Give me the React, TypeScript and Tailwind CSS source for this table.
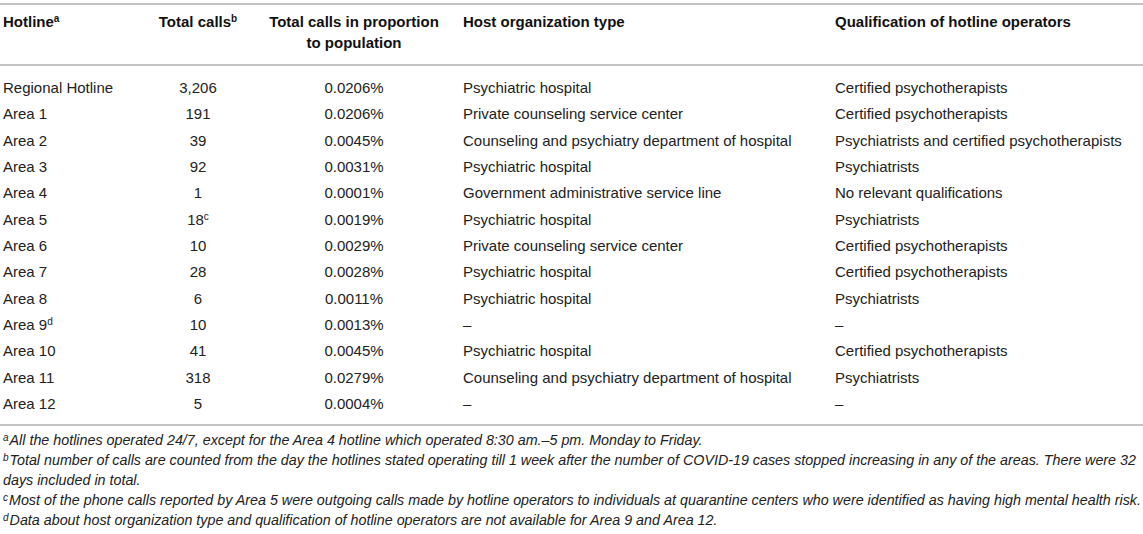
import React from "react";

const rows: [React.ReactNode, React.ReactNode, string, string, string][] = [
  ["Regional Hotline", "3,206", "0.0206%", "Psychiatric hospital", "Certified psychotherapists"],
  ["Area 1", "191", "0.0206%", "Private counseling service center", "Certified psychotherapists"],
  ["Area 2", "39", "0.0045%", "Counseling and psychiatry department of hospital", "Psychiatrists and certified psychotherapists"],
  ["Area 3", "92", "0.0031%", "Psychiatric hospital", "Psychiatrists"],
  ["Area 4", "1", "0.0001%", "Government administrative service line", "No relevant qualifications"],
  ["Area 5", <>18<sup className="text-[10px] leading-none relative -top-[5px]">c</sup></>, "0.0019%", "Psychiatric hospital", "Psychiatrists"],
  ["Area 6", "10", "0.0029%", "Private counseling service center", "Certified psychotherapists"],
  ["Area 7", "28", "0.0028%", "Psychiatric hospital", "Certified psychotherapists"],
  ["Area 8", "6", "0.0011%", "Psychiatric hospital", "Psychiatrists"],
  [<>Area 9<sup className="text-[10px] leading-none relative -top-[5px]">d</sup></>, "10", "0.0013%", "–", "–"],
  ["Area 10", "41", "0.0045%", "Psychiatric hospital", "Certified psychotherapists"],
  ["Area 11", "318", "0.0279%", "Counseling and psychiatry department of hospital", "Psychiatrists"],
  ["Area 12", "5", "0.0004%", "–", "–"],
];

const grid = "grid grid-cols-[143px_110px_202px_372px_1fr]";

function Sup({ c }: { c: string }) {
  return <sup className="text-[10px] leading-none relative -top-[5px]">{c}</sup>;
}

function FSup({ c }: { c: string }) {
  return <sup className="text-[10px] leading-none relative -top-[4px] mr-[1px]">{c}</sup>;
}

export default function App() {
  return (
    <div
      className="w-[1143px] h-[534px] bg-white text-[#222] overflow-hidden"
      style={{ fontFamily: '"Liberation Sans", Arial, sans-serif' }}
    >
      <div className="pt-[3px]">
        <div className="border-t-2 border-[#c4c4c4]" />
        <div className={`${grid} pt-[6px] pb-[11px] text-[15px] leading-[21px] font-bold text-[#111] border-b-2 border-[#c4c4c4]`}>
          <div className="pl-[3px]">Hotline<Sup c="a" /></div>
          <div className="text-center">Total calls<Sup c="b" /></div>
          <div className="text-center">Total calls in proportion<br />to population</div>
          <div className="pl-[8px]">Host organization type</div>
          <div className="pl-[8px]">Qualification of hotline operators</div>
        </div>
        <div className="pt-[9px] pb-[7px] text-[15px] border-b-2 border-[#c4c4c4]">
          {rows.map((r, i) => (
            <div key={i} className={`${grid} h-[26.33px] items-center`}>
              <div className="pl-[3px]">{r[0]}</div>
              <div className="text-center">{r[1]}</div>
              <div className="text-center">{r[2]}</div>
              <div className="pl-[8px]">{r[3]}</div>
              <div className="pl-[8px]">{r[4]}</div>
            </div>
          ))}
        </div>
        <div className="pt-[4px] pl-[3px] pr-[2px] text-[14.3px] leading-[20px] italic">
          <p><FSup c="a" />All the hotlines operated 24/7, except for the Area 4 hotline which operated 8:30 am.–5 pm. Monday to Friday.</p>
          <p><FSup c="b" />Total number of calls are counted from the day the hotlines stated operating till 1 week after the number of COVID-19 cases stopped increasing in any of the areas. There were 32 days included in total.</p>
          <p><FSup c="c" />Most of the phone calls reported by Area 5 were outgoing calls made by hotline operators to individuals at quarantine centers who were identified as having high mental health risk.</p>
          <p><FSup c="d" />Data about host organization type and qualification of hotline operators are not available for Area 9 and Area 12.</p>
        </div>
      </div>
    </div>
  );
}
